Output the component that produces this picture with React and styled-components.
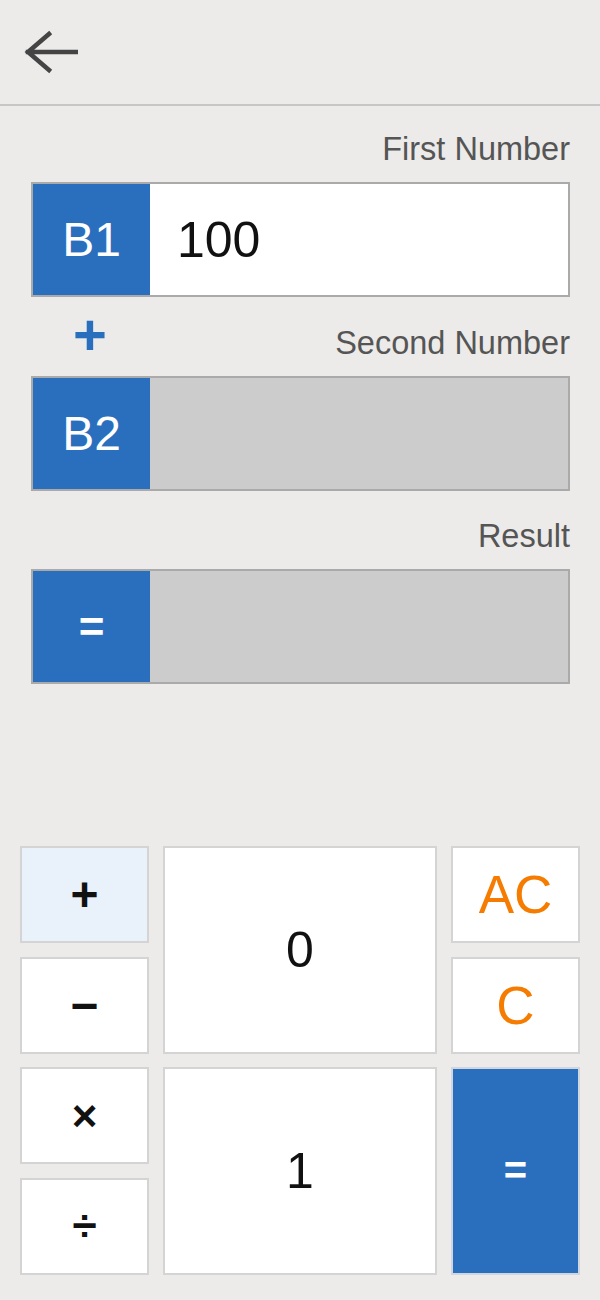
import React, { useState } from "react";
import styled, { createGlobalStyle } from "styled-components";

const GlobalStyle = createGlobalStyle`
  body {
    margin: 0;
    background: #ecebe9;
    font-family: "Liberation Sans", Arial, sans-serif;
  }
`;

const Page = styled.div`
  width: 600px;
  min-height: 1300px;
  background: #ecebe9;
`;

const Header = styled.header`
  height: 106px;
  border-bottom: 2px solid #c6c6c6;
  display: flex;
  align-items: center;
  padding-left: 24px;
  box-sizing: border-box;
`;

const BackButton = styled.button`
  border: none;
  background: none;
  padding: 0;
  width: 56px;
  height: 48px;
  display: flex;
  align-items: center;
  cursor: pointer;
`;

const Form = styled.main`
  padding: 0 30px 0 31px;
`;

const LabelRow = styled.div`
  height: ${(p) => p.$height || 80}px;
  display: flex;
  justify-content: space-between;
  align-items: flex-end;
  padding-bottom: 15px;
  box-sizing: border-box;
`;

const Operator = styled.span`
  width: 118px;
  text-align: center;
  color: #2a6fbd;
  font-size: 58px;
  font-weight: 700;
  line-height: 36px;
  margin-bottom: 8px;
`;

const Label = styled.span`
  margin-left: auto;
  color: #555555;
  font-size: 32.5px;
  line-height: 36px;
`;

const Field = styled.div`
  display: flex;
  height: 115px;
  border: 2px solid #aaaaaa;
  box-sizing: border-box;
  background: ${(p) => (p.$active ? "#ffffff" : "#cccccc")};
`;

const Tag = styled.div`
  width: 117px;
  flex-shrink: 0;
  background: #2a6fbd;
  color: #ffffff;
  display: flex;
  align-items: center;
  justify-content: center;
  font-size: ${(p) => (p.$small ? 44 : 48)}px;
  font-weight: ${(p) => (p.$small ? 700 : 400)};
`;

const Value = styled.div`
  flex: 1;
  display: flex;
  align-items: center;
  padding-left: 27px;
  font-size: 50px;
  color: #111111;
`;

const Keypad = styled.div`
  margin-top: 162px;
  padding: 0 20px;
  display: grid;
  grid-template-columns: 129px 274px 129px;
  grid-template-rows: repeat(4, 97px);
  column-gap: 14px;
  row-gap: 13.5px;
`;

const Key = styled.button`
  grid-column: ${(p) => p.$col};
  grid-row: ${(p) => p.$row};
  border: 2px solid ${(p) => (p.$primary ? "#cfd6df" : "#d4d4d4")};
  background: ${(p) =>
    p.$primary ? "#2a6fbd" : p.$selected ? "#e9f1fb" : "#ffffff"};
  color: ${(p) =>
    p.$primary ? "#ffffff" : p.$accent ? "#f57c00" : "#111111"};
  font-family: "Liberation Sans", Arial, sans-serif;
  font-size: ${(p) => p.$size || 50}px;
  font-weight: ${(p) => p.$weight || 400};
  padding: 0;
  display: flex;
  align-items: center;
  justify-content: center;
  cursor: pointer;
`;

const BackArrow = () => (
  <svg width="54" height="44" viewBox="0 0 54 44" fill="none">
    <path
      d="M52 22H4M25 4L4 22L25 40"
      stroke="#444444"
      strokeWidth="4.5"
      strokeLinecap="square"
    />
  </svg>
);

const App = () => {
  const [operator, setOperator] = useState("+");
  const [first, setFirst] = useState("100");

  const ops = [
    { label: "+", row: 1, size: 48, weight: 700 },
    { label: "−", row: 2, size: 48, weight: 700 },
    { label: "×", row: 3, size: 44, weight: 700 },
    { label: "÷", row: 4, size: 44, weight: 700 },
  ];

  return (
    <Page>
      <GlobalStyle />
      <Header>
        <BackButton aria-label="back">
          <BackArrow />
        </BackButton>
      </Header>
      <Form>
        <LabelRow $height={76}>
          <Label>First Number</Label>
        </LabelRow>
        <Field $active>
          <Tag>B1</Tag>
          <Value>{first}</Value>
        </Field>

        <LabelRow $height={79}>
          <Operator>{operator}</Operator>
          <Label>Second Number</Label>
        </LabelRow>
        <Field>
          <Tag>B2</Tag>
          <Value />
        </Field>

        <LabelRow $height={78}>
          <Label>Result</Label>
        </LabelRow>
        <Field>
          <Tag $small>=</Tag>
          <Value />
        </Field>
      </Form>

      <Keypad>
        {ops.map((op) => (
          <Key
            key={op.label}
            $col={1}
            $row={op.row}
            $size={op.size}
            $weight={op.weight}
            $selected={operator === op.label}
            onClick={() => setOperator(op.label)}
          >
            {op.label}
          </Key>
        ))}
        <Key $col={2} $row="1 / span 2" onClick={() => setFirst(first + "0")}>
          0
        </Key>
        <Key $col={2} $row="3 / span 2" onClick={() => setFirst(first + "1")}>
          1
        </Key>
        <Key $col={3} $row={1} $accent $size={53} onClick={() => setFirst("")}>
          AC
        </Key>
        <Key
          $col={3}
          $row={2}
          $accent
          $size={53}
          onClick={() => setFirst(first.slice(0, -1))}
        >
          C
        </Key>
        <Key $col={3} $row="3 / span 2" $primary $size={40} $weight={700}>
          =
        </Key>
      </Keypad>
    </Page>
  );
};

export default App;
